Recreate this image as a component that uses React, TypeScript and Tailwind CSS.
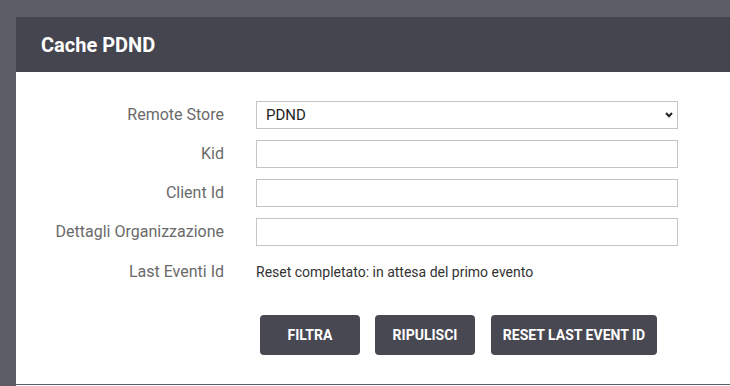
import { useState } from "react";

const fields = ["Kid", "Client Id", "Dettagli Organizzazione"];

export default function App() {
  const [store, setStore] = useState("PDND");

  return (
    <div
      className="h-[386px] w-[730px] overflow-hidden bg-[#5d5d67] pl-[16px] pt-[17px]"
      style={{ fontFamily: "Roboto, 'Liberation Sans', sans-serif" }}
    >
      <div className="w-[760px] bg-white">
        <div className="flex h-[55px] items-center bg-[#45454f] px-[25px]">
          <h1 className="text-[20px] font-bold text-white">Cache PDND</h1>
        </div>

        <div className="h-[313px] border-b border-[#5d5d67] pt-[29px]">
          <div className="grid grid-cols-[208px_422px] items-center gap-x-[32px] gap-y-[11px]">
            <label className="text-right text-[16px] text-[#6a6a6a]">Remote Store</label>
            <div className="relative">
              <select
                className="h-[28px] w-full appearance-none border border-[#c4c4c4] bg-white px-[9px] text-[15px] text-[#222] outline-none"
                value={store}
                onChange={(e) => setStore(e.target.value)}
              >
                <option>PDND</option>
              </select>
              <svg
                className="pointer-events-none absolute right-[5px] top-[11px]"
                width="8"
                height="6"
                viewBox="0 0 8 6"
              >
                <path d="M1 1 4 4.2 7 1" fill="none" stroke="#222" strokeWidth="2" />
              </svg>
            </div>

            {fields.map((f) => (
              <>
                <label key={f} className="text-right text-[16px] text-[#6a6a6a]">
                  {f}
                </label>
                <input
                  key={f + "-in"}
                  className="h-[28px] w-full border border-[#c4c4c4] px-[9px] text-[14px] outline-none"
                />
              </>
            ))}

            <label className="mt-[3px] text-right text-[16px] text-[#6a6a6a]">Last Eventi Id</label>
            <div className="mt-[3px] text-[14px] text-[#333]">
              Reset completato: in attesa del primo evento
            </div>
          </div>

          <div className="ml-[244px] mt-[31px] flex gap-[15px]">
            <button className="h-[40px] w-[100px] rounded-[4px] bg-[#484852] text-[14px] font-bold text-white">
              FILTRA
            </button>
            <button className="h-[40px] w-[100px] rounded-[4px] bg-[#484852] text-[14px] font-bold text-white">
              RIPULISCI
            </button>
            <button className="ml-[1px] h-[40px] w-[166px] rounded-[4px] bg-[#484852] text-[14px] font-bold text-white">
              RESET LAST EVENT ID
            </button>
          </div>
        </div>
        <div className="h-[20px] bg-white" />
      </div>
    </div>
  );
}
